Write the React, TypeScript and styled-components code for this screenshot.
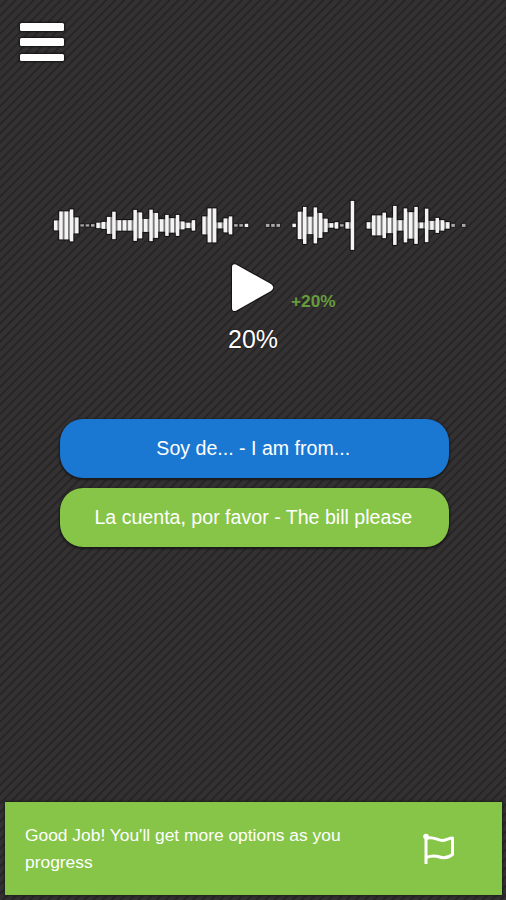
import React from 'react';
import styled, { createGlobalStyle } from 'styled-components';

const GlobalStyle = createGlobalStyle`
  * { box-sizing: border-box; }
  body { margin: 0; }
`;

const Screen = styled.main`
  display: flex;
  flex-direction: column;
  width: 100%;
  height: 100vh;
  min-height: 900px;
  overflow: hidden;
  font-family: "Liberation Sans", Arial, sans-serif;
  color: #fff;
  background: #312f30 repeating-linear-gradient(
    135deg,
    #333132 0,
    #333132 3.2px,
    #252324 4.7px,
    #252324 5px,
    #333132 6.4px
  );
`;

const Header = styled.header`
  height: 198px;
  padding: 23px 0 0 20px;
`;

const MenuButton = styled.button`
  display: flex;
  flex-direction: column;
  gap: 7.5px;
  width: 43.5px;
  padding: 0;
  border: 0;
  background: none;
`;

const MenuLine = styled.span`
  height: 7.8px;
  border-radius: 1.5px;
  background: #fff;
  box-shadow: 0 0 2px 1px #151314;
`;

const Wave = styled.svg`
  display: block;
  flex: none;
  width: 506px;
  height: 56px;
`;

const Player = styled.section`
  display: grid;
  grid-template-columns: 1fr 50px 1fr;
  height: 165.4px;
  padding-top: 8px;
  align-content: start;
  align-items: end;
`;

const PlayButton = styled.button`
  grid-column: 2;
  width: 50px;
  height: 52px;
  padding: 0;
  border: 0;
  background: none;
  svg { display: block; }
`;

const Gain = styled.span`
  padding: 0 0 3px 13px;
  font-size: 17.3px;
  line-height: 20px;
  font-weight: 700;
  color: #669d3c;
`;

const Score = styled.div`
  grid-column: 2;
  padding-top: 10px;
  font-size: 25px;
  line-height: 30px;
  text-align: center;
  text-shadow: 0 0 2px #151314;
`;

const Options = styled.section`
  display: flex;
  flex-direction: column;
  gap: 10px;
  padding: 0 57.5px 0 60px;
`;

const Option = styled.button<{ $color: string }>`
  height: 59px;
  padding: 0 2px 0.6px 0;
  border: 0;
  border-radius: 23px;
  background: ${({ $color }) => $color};
  box-shadow: 0 1px 2px 1px #1b191a;
  color: #fff;
  font: 19.6px "Liberation Sans", Arial, sans-serif;
  white-space: nowrap;
`;

const Toast = styled.aside`
  display: flex;
  justify-content: space-between;
  height: 93px;
  margin: auto 4px 5px 5px;
  padding: 20px 47px 0 20px;
  background: #86c548;
  box-shadow: 0 0 2px 1px #1d211a;
`;

const Message = styled.p`
  width: 330px;
  margin: 0;
  font-size: 17.4px;
  line-height: 27px;
`;

const FlagIcon = styled.svg`
  width: 32px;
  height: 34px;
  margin-top: 10px;
`;

/* Amplitude of each sample; zero is silence. */
const samples = [
  10, 28, 28, 32, 16, 2.2, 2.2, 2.6, 5.5, 7, 17, 27.5, 10.5, 10.5, 10.5, 31, 26, 13, 31.5,
  25, 12.5, 21, 14.5, 21, 8, 5.5, 10.5, 0, 18, 34, 34, 6, 14, 18, 2.6, 2.6, 3.2, 0, 0, 0,
  3, 3, 3, 0, 0, 3.4, 27.5, 37, 17.5, 36, 25, 13.5, 4.6, 6.5, 2.4, 6.5, 49, 0, 0,
  6.5, 20, 20, 25.5, 15.5, 39, 10.5, 34, 26.5, 37, 6, 33.5, 9, 15, 10.5, 6.5, 3, 0, 3,
];

const MIDDLE = 27.4;
const barX = (i: number) => 53.9 + i * 5.3;

function Waveform() {
  return (
    <Wave viewBox="0 0 506 56">
      {samples.map((h, i) => h > 0 && (
        <rect key={i} x={barX(i) - 1.2} y={MIDDLE - h / 2 - 1.2} width={5.9} height={h + 2.4} rx={1} fill="#141213" opacity={h > 4 ? 0.9 : 0.4} />
      ))}
      {samples.map((h, i) => {
        const shared = Math.min(h, samples[i + 1] ?? 0);
        return shared > 4 && (
          <rect key={i} x={barX(i) + 3} y={MIDDLE - shared / 2} width={3} height={shared} fill="#777676" />
        );
      })}
      {samples.map((h, i) => h > 0 && (
        <rect key={i} x={barX(i)} y={MIDDLE - h / 2} width={3.5} height={h} fill={h < 3.1 ? '#a9a8a8' : '#f4f4f4'} />
      ))}
    </Wave>
  );
}

export default function App() {
  return (
    <>
      <GlobalStyle />
      <Screen>
        <Header>
          <MenuButton aria-label="Menu">
            <MenuLine />
            <MenuLine />
            <MenuLine />
          </MenuButton>
        </Header>
        <Waveform />
        <Player>
          <PlayButton aria-label="Play">
            <svg width="50" height="52" viewBox="0 0 50 52">
              <path
                d="M4 5.5Q4 1.5 8 2.5L43 22Q47.5 25.5 43 29L8 48.8Q4 50 4 46Z"
                fill="#fff" stroke="#151314" strokeWidth="2.2" paintOrder="stroke"
              />
            </svg>
          </PlayButton>
          <Gain>+20%</Gain>
          <Score>20%</Score>
        </Player>
        <Options>
          <Option $color="#1b78d2">Soy de... - I am from...</Option>
          <Option $color="#86c548">La cuenta, por favor - The bill please</Option>
        </Options>
        <Toast>
          <Message>Good Job! You'll get more options as you progress</Message>
          <FlagIcon viewBox="0 0 32 34" fill="none" stroke="#fff" strokeWidth="3" strokeLinejoin="round">
            <circle cx="3" cy="4.5" r="2.8" fill="#fff" stroke="none" />
            <path d="M3 4V32" strokeLinecap="butt" />
            <path d="M3 6.5C10 3.5 15 9 20 8.5C24 8 26 6 29.5 6V22.5C25 26 20 26.5 15 24.5C10 23 7 24 3 25.5" />
          </FlagIcon>
        </Toast>
      </Screen>
    </>
  );
}
